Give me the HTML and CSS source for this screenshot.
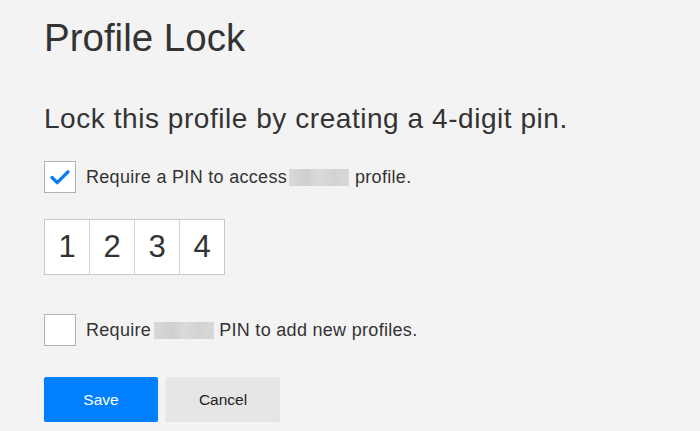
FILE: index.html
```html
<!DOCTYPE html>
<html>
<head>
<meta charset="utf-8">
<link rel="stylesheet" href="styles.css">
</head>
<body>
<main class="page">
  <h1 class="title">Profile Lock</h1>
  <h2 class="subtitle">Lock this profile by creating a 4-digit pin.</h2>
  <label class="check-row row-first">
    <span class="box">
      <svg viewBox="0 0 32 32" width="32" height="32"><path d="M7.5 16.5 L13 22 L24.5 10.5" fill="none" stroke="#0a7cf0" stroke-width="3.6" stroke-linecap="round" stroke-linejoin="round"/></svg>
    </span>
    <span class="label">Require a PIN to access<span class="blur b1"></span>profile.</span>
  </label>
  <div class="pin">
    <span class="cell">1</span><span class="cell">2</span><span class="cell">3</span><span class="cell">4</span>
  </div>
  <label class="check-row row-second">
    <span class="box"></span>
    <span class="label">Require<span class="blur b2"></span>PIN to add new profiles.</span>
  </label>
  <div class="actions">
    <button class="btn save">Save</button>
    <button class="btn cancel">Cancel</button>
  </div>
</main>
</body>
</html>
```
FILE: styles.css
```css
html, body {
  margin: 0;
  padding: 0;
  background: #f3f3f3;
  font-family: "Liberation Sans", Arial, sans-serif;
  color: #333;
}
.page {
  padding: 16px 44px 0;
}
.title {
  margin: 0;
  font-size: 38.5px;
  font-weight: 400;
  line-height: 44px;
  color: #333;
}
.subtitle {
  margin: 43px 0 0;
  font-size: 28px;
  letter-spacing: 0.55px;
  font-weight: 400;
  line-height: 32px;
  color: #333;
}
.check-row {
  display: flex;
  align-items: center;
  gap: 10px;
}
.row-first { margin-top: 26px; }
.row-second { margin-top: 39px; }
.box {
  width: 30px;
  height: 30px;
  border: 1px solid #b3b3b3;
  background: #fff;
  display: flex;
  align-items: center;
  justify-content: center;
  flex: none;
}
.box svg { width: 30px; height: 30px; }
.label {
  font-size: 18px;
  letter-spacing: 0.3px;
  color: #333;
  display: flex;
  align-items: center;
  white-space: pre;
}
.blur {
  display: inline-block;
  height: 17px;
  background: linear-gradient(90deg, #d9d9d9 0%, #cfcfcf 30%, #dadada 50%, #d3d3d3 75%, #d8d8d8 100%);
}
.b1 { width: 60px; margin: 0 6px 0 2px; }
.b2 { width: 60px; margin: 0 5px 0 3px; }
.pin {
  display: flex;
  margin-top: 26px;
  width: max-content;
  border: 1px solid #c8c8c8;
}
.cell {
  width: 44px;
  height: 54px;
  background: #fff;
  font-size: 31px;
  display: flex;
  align-items: center;
  justify-content: center;
  color: #333;
}
.cell + .cell { border-left: 1px solid #d3d3d3; }
.actions {
  display: flex;
  gap: 8px;
  margin-top: 31px;
}
.btn {
  width: 114px;
  height: 45px;
  border: none;
  border-radius: 2px;
  font-family: "Liberation Sans", Arial, sans-serif;
  font-size: 15.5px;
  cursor: pointer;
}
.save {
  background: #0080ff;
  color: #fff;
  box-shadow: 0 1px 1px rgba(0,0,0,0.25);
}
.cancel {
  background: #e6e6e6;
  color: #222;
  box-shadow: 0 1px 1px rgba(0,0,0,0.15);
}
```
